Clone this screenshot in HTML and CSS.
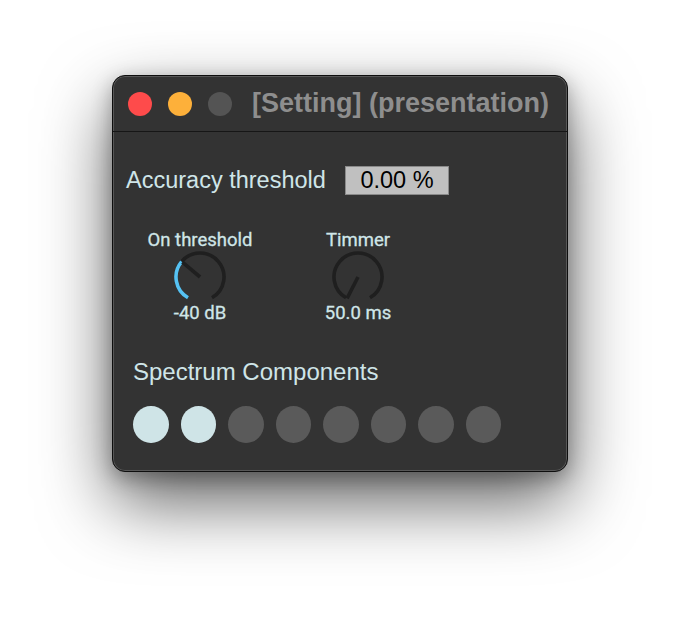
FILE: index.html
```html
<!DOCTYPE html>
<html>
<head>
<meta charset="utf-8">
<link rel="stylesheet" href="styles.css">
</head>
<body>
<div class="window">
  <div class="titlebar">
    <div class="lights">
      <span class="light red"></span>
      <span class="light yellow"></span>
      <span class="light gray"></span>
    </div>
    <div class="title">[Setting] (presentation)</div>
  </div>
  <div class="content">
    <div class="acc-row">
      <div class="acc-label">Accuracy threshold</div>
      <div class="numbox">0.00 %</div>
    </div>
    <div class="knobs">
      <div class="knob">
        <div class="knob-label">On threshold</div>
        <svg class="dial" width="52" height="52" viewBox="4 4 52 52">
          <path d="M18 50.78 A24 24 0 1 1 42 50.78" class="track"/>
          <path d="M18 50.78 A24 24 0 0 1 11.62 14.57" class="value"/>
          <line x1="30" y1="30" x2="12.4" y2="15.2" class="needle"/>
        </svg>
        <div class="knob-value">-40 dB</div>
      </div>
      <div class="knob">
        <div class="knob-label">Timmer</div>
        <svg class="dial" width="52" height="52" viewBox="4 4 52 52">
          <path d="M18 50.78 A24 24 0 1 1 42 50.78" class="track"/>
          <line x1="30" y1="30" x2="19.1" y2="51.4" class="needle"/>
        </svg>
        <div class="knob-value">50.0 ms</div>
      </div>
    </div>
    <div class="spec-title">Spectrum Components</div>
    <div class="dots">
      <span class="dot on"></span>
      <span class="dot on"></span>
      <span class="dot"></span>
      <span class="dot"></span>
      <span class="dot"></span>
      <span class="dot"></span>
      <span class="dot"></span>
      <span class="dot"></span>
    </div>
  </div>
</div>
</body>
</html>
```

FILE: styles.css
```css
html, body {
  margin: 0;
  padding: 0;
  background: #ffffff;
}
body {
  width: 680px;
  height: 620px;
  padding: 75px 0 0 112px;
  box-sizing: border-box;
  font-family: "Liberation Sans", Arial, sans-serif;
}
.window {
  width: 456px;
  height: 397px;
  box-sizing: border-box;
  background: #333333;
  border: 1px solid #0e0e0e;
  border-radius: 13px;
  box-shadow: inset 0 0 0 1px #575757, 0 30px 70px rgba(0, 0, 0, 0.62), 0 6px 20px rgba(0, 0, 0, 0.3);
}
.titlebar {
  height: 55px;
  border-bottom: 1px solid #161616;
  display: flex;
  align-items: center;
  padding-left: 15px;
}
.lights {
  display: flex;
  gap: 16px;
}
.light {
  width: 24px;
  height: 24px;
  border-radius: 50%;
  display: block;
}
.red { background: #fe4b4b; }
.yellow { background: #fdb03a; }
.gray { background: #545454; }
.title {
  margin-left: 20px;
  font-weight: bold;
  font-size: 27px;
  color: #8e8e8e;
  white-space: nowrap;
}
.content {
  padding-left: 13px;
}
.acc-row {
  margin-top: 34px;
  display: flex;
  align-items: center;
  height: 29px;
}
.acc-label {
  width: 219px;
  font-size: 23.5px;
  line-height: 29px;
  color: #cfe5e8;
}
.numbox {
  width: 104px;
  height: 29px;
  box-sizing: border-box;
  background: #c0c0c0;
  border: 1px solid #8a8a8a;
  color: #000;
  font-size: 23.5px;
  line-height: 27px;
  text-align: center;
}
.knobs {
  margin-top: 35px;
  margin-left: 14px;
  display: flex;
  gap: 38px;
}
.knob {
  width: 120px;
  display: flex;
  flex-direction: column;
  align-items: center;
}
.knob-label, .knob-value {
  font-family: Roboto, "Liberation Sans", sans-serif;
  font-weight: 400;
  font-size: 18.5px;
  line-height: 20px;
  color: #d0e6e8;
  white-space: nowrap;
  -webkit-text-stroke: 0.3px #d0e6e8;
}
.dial {
  display: block;
  margin-top: 1px;
}
.track, .value {
  fill: none;
  stroke-width: 3.6;
  stroke-linecap: butt;
}
.track { stroke: #1f1f1f; }
.value { stroke: #56c2f3; }
.needle {
  stroke: #1f1f1f;
  stroke-width: 3.6;
}
.spec-title {
  margin-top: 35px;
  margin-left: 7px;
  font-size: 24px;
  line-height: 28px;
  color: #cfe5e8;
}
.dots {
  margin-top: 20px;
  margin-left: 7px;
  display: flex;
  gap: 12px;
}
.dot {
  display: block;
  width: 35.5px;
  height: 37px;
  border-radius: 50%;
  background: #5a5a5a;
}
.dot.on { background: #cfe4e7; }
```
